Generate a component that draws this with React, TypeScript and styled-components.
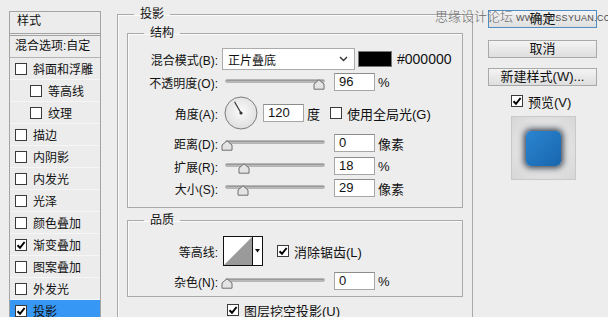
import React from 'react';
import styled, { createGlobalStyle } from 'styled-components';

const GlobalStyle = createGlobalStyle`
    html, body {
        margin: 0;
        padding: 0;
        background: #ededed;
    }
    body {
        font-family: "Liberation Sans", "Noto Sans CJK SC", sans-serif;
        font-size: 12px;
        color: #111;
    }
`

const Root = styled.div`
    position: relative;
    display: flex;
    align-items: flex-start;
    width: 608px;
    height: 317px;
    overflow: hidden;
    background: #ededed;
`

/* ---------- left style list ---------- */

const StylePanel = styled.div`
    margin: 11px 0 0 9px;
    width: 92px;
    height: 330px;
    box-sizing: border-box;
    border: 1px solid #a4a4a4;
    background: #ececec;
    flex-shrink: 0;
`

const PanelHeader = styled.div`
    height: 21px;
    line-height: 19px;
    padding-left: 7px;
    border-bottom: 3px double #a2a2a2;
`

const BlendRow = styled.div`
    height: 21px;
    line-height: 20px;
    padding-left: 5px;
    border-bottom: 1px solid #b4b4b4;
    white-space: nowrap;
`

const StyleItem = styled.div<{ $nested?: boolean; $active?: boolean }>`
    height: 22px;
    box-sizing: border-box;
    display: flex;
    align-items: center;
    gap: 6px;
    padding-left: ${p => (p.$nested ? 20 : 5)}px;
    border-bottom: 1px solid #f6f6f6;
    background: ${p => (p.$active ? '#3797f5' : 'transparent')};
    white-space: nowrap;
`

/* ---------- checkbox ---------- */

const Box = styled.span`
    width: 12px;
    height: 12px;
    box-sizing: border-box;
    border: 1px solid #3a3a3a;
    background: #fff;
    display: inline-flex;
    align-items: center;
    justify-content: center;
    flex-shrink: 0;
`

const Check: React.FC<{ on?: boolean }> = ({ on }) => (
    <Box>
        {on && (
            <svg width="10" height="10" viewBox="0 0 10 10">
                <path d="M1.5 5.2 L4 7.8 L8.6 2" fill="none" stroke="#000" strokeWidth="2" />
            </svg>
        )}
    </Box>
)

/* ---------- middle settings ---------- */

const Middle = styled.div`
    margin-left: 16px;
    padding-top: 6px;
    width: 356px;
    flex-shrink: 0;
`

const Group = styled.fieldset`
    margin: 0;
    padding: 0;
    min-width: 0;
    border: 1px solid #a9a9a9;
    box-shadow: inset 1px 1px 0 #fafafa;
`

const Legend = styled.legend`
    margin-left: 16px;
    padding: 0 6px;
    font-size: 12px;
    line-height: 16px;
`

const OuterBody = styled.div`
    padding: 3px 9px 0 9px;
    height: 300px;
`

const GroupBody = styled.div<{ $top: number; $bottom: number }>`
    padding: ${p => p.$top}px 0 ${p => p.$bottom}px 0;
    display: flex;
    flex-direction: column;
`

const Row = styled.div<{ $h: number; $mt?: number }>`
    display: flex;
    align-items: center;
    height: ${p => p.$h}px;
    margin-top: ${p => p.$mt ?? 0}px;
`

const Label = styled.div`
    width: 90px;
    text-align: right;
    white-space: nowrap;
    flex-shrink: 0;
`

const Select = styled.div`
    margin-left: 4px;
    width: 133px;
    height: 22px;
    box-sizing: border-box;
    border: 1px solid #ababab;
    background: #fff;
    display: flex;
    align-items: center;
    justify-content: space-between;
    padding: 0 6px 0 5px;
`

const Swatch = styled.div`
    margin-left: 3px;
    width: 34px;
    height: 16px;
    background: #000;
    border: 1px solid #777;
    box-sizing: border-box;
`

const HexText = styled.span`
    margin-left: 5px;
    font-size: 14px;
`

const Track = styled.div<{ $ml: number }>`
    position: relative;
    margin-left: ${p => p.$ml}px;
    width: 100px;
    height: 18px;
    flex-shrink: 0;
    &::before {
        content: '';
        position: absolute;
        left: 0;
        right: 0;
        top: 6px;
        height: 4px;
        border-radius: 2px;
        background: linear-gradient(#8a8a8a, #c9c9c9);
        border: 1px solid #b5b5b5;
        box-sizing: border-box;
    }
`

const Thumb = styled.svg<{ $pos: number }>`
    position: absolute;
    top: 6px;
    left: ${p => p.$pos - 6}px;
`

const Slider: React.FC<{ pos: number; ml?: number }> = ({ pos, ml = 7 }) => (
    <Track $ml={ml}>
        <Thumb $pos={pos} width="12" height="11" viewBox="0 0 12 11">
            <path d="M6 0.8 L11 5 L11 10.2 L1 10.2 L1 5 Z" fill="#e4e4e4" stroke="#6e6e6e" strokeWidth="1" />
        </Thumb>
    </Track>
)

const NumBox = styled.div<{ $ml: number }>`
    margin-left: ${p => p.$ml}px;
    width: 41px;
    height: 18px;
    box-sizing: border-box;
    border: 1px solid #a6a6a6;
    border-top-color: #8c8c8c;
    background: #fff;
    padding-left: 4px;
    font-size: 13px;
    line-height: 16px;
    flex-shrink: 0;
`

const Unit = styled.span<{ $ml?: number }>`
    margin-left: ${p => p.$ml ?? 3}px;
    white-space: nowrap;
    font-size: 13px;
`

const Dial = styled.svg`
    margin-left: 6px;
    flex-shrink: 0;
`

const CheckLabel = styled.label<{ $ml: number }>`
    margin-left: ${p => p.$ml}px;
    display: flex;
    align-items: center;
    gap: 5px;
    white-space: nowrap;
    font-size: 13px;
`

const ContourBox = styled.div`
    margin-left: 5px;
    width: 40px;
    height: 30px;
    box-sizing: border-box;
    border: 1px solid #111;
    background: #fff;
    display: flex;
    flex-shrink: 0;
`

const ContourArrow = styled.div`
    flex: 1;
    border-left: 1px solid #111;
    display: flex;
    align-items: center;
    justify-content: center;
`

const Gap = styled.div<{ $h: number }>`
    height: ${p => p.$h}px;
`

/* ---------- right column ---------- */

const Right = styled.div`
    margin-left: 15px;
    padding-top: 10px;
    width: 109px;
    display: flex;
    flex-direction: column;
    flex-shrink: 0;
`

const Button = styled.div<{ $primary?: boolean; $mt: number }>`
    margin-top: ${p => p.$mt}px;
    height: 18px;
    box-sizing: border-box;
    border: 1px solid ${p => (p.$primary ? '#4f8fc6' : '#a9a9a9')};
    background: linear-gradient(#f4f4f4, #dedede);
    text-align: center;
    font-size: 13px;
    line-height: 16px;
    white-space: nowrap;
`

const PreviewRow = styled.label`
    margin: 9px 0 0 23px;
    display: flex;
    align-items: center;
    gap: 5px;
    height: 12px;
    font-size: 13px;
`

const PreviewBox = styled.div`
    margin: 9px 0 0 23px;
    width: 65px;
    height: 64px;
    box-sizing: border-box;
    border: 1px solid #c9c9c9;
    background: radial-gradient(circle, #e9e9e9 30%, #d6d6d6 100%);
    display: flex;
    align-items: center;
    justify-content: center;
`

const PreviewSwatch = styled.div`
    width: 35px;
    height: 35px;
    border-radius: 5px;
    background: linear-gradient(135deg, #2b85d0, #1766ad);
    box-shadow: 0 0 6px 2px rgba(10, 20, 40, 0.8);
`

const Watermark = styled.div`
    position: absolute;
    left: 435px;
    top: 6px;
    display: flex;
    align-items: baseline;
    gap: 3px;
    white-space: nowrap;
    color: #6a6a6a;
    pointer-events: none;
`

const WmCn = styled.span`
    font-size: 13px;
    font-family: "Noto Sans CJK SC", sans-serif;
    font-weight: 300;
`

const WmEn = styled.span`
    font-size: 9px;
    letter-spacing: 0.3px;
    color: #4c4c4c;
`

const styleItems: { name: string; on?: boolean; nested?: boolean; active?: boolean }[] = [
    { name: '斜面和浮雕' },
    { name: '等高线', nested: true },
    { name: '纹理', nested: true },
    { name: '描边' },
    { name: '内阴影' },
    { name: '内发光' },
    { name: '光泽' },
    { name: '颜色叠加' },
    { name: '渐变叠加', on: true },
    { name: '图案叠加' },
    { name: '外发光' },
    { name: '投影', on: true, active: true },
];

const App: React.FC = () => {
    // angle dial needle, 120 degrees
    const a = (120 * Math.PI) / 180;
    const nx = 17 + Math.cos(a) * 13;
    const ny = 17 - Math.sin(a) * 13;

    return <Root>
        <GlobalStyle />
        <StylePanel>
            <PanelHeader>样式</PanelHeader>
            <BlendRow>混合选项:自定</BlendRow>
            {styleItems.map((s, i) => (
                <StyleItem key={i} $nested={s.nested} $active={s.active}>
                    <Check on={s.on} />
                    <span>{s.name}</span>
                </StyleItem>
            ))}
        </StylePanel>

        <Middle>
            <Group>
                <Legend>投影</Legend>
                <OuterBody>
                    <Group>
                        <Legend>结构</Legend>
                        <GroupBody $top={7} $bottom={10}>
                            <Row $h={22}>
                                <Label>混合模式(B):</Label>
                                <Select>
                                    <span>正片叠底</span>
                                    <svg width="9" height="6" viewBox="0 0 9 6">
                                        <path d="M1 1 L4.5 4.5 L8 1" fill="none" stroke="#333" strokeWidth="1.4" />
                                    </svg>
                                </Select>
                                <Swatch />
                                <HexText>#000000</HexText>
                            </Row>
                            <Row $h={18} $mt={3}>
                                <Label>不透明度(O):</Label>
                                <Slider pos={94} />
                                <NumBox $ml={9}>96</NumBox>
                                <Unit>%</Unit>
                            </Row>
                            <Row $h={34} $mt={5}>
                                <Label>角度(A):</Label>
                                <Dial width="34" height="34" viewBox="0 0 34 34">
                                    <defs>
                                        <radialGradient id="dialFill" cx="50%" cy="45%" r="60%">
                                            <stop offset="0%" stopColor="#fbfbfb" />
                                            <stop offset="100%" stopColor="#dcdcdc" />
                                        </radialGradient>
                                    </defs>
                                    <circle cx="17" cy="17" r="16" fill="url(#dialFill)" stroke="#7d7d7d" strokeWidth="1" />
                                    <line x1="17" y1="17" x2={nx} y2={ny} stroke="#333" strokeWidth="1.2" />
                                    <circle cx="17" cy="17" r="1.6" fill="#333" />
                                </Dial>
                                <NumBox $ml={5}>120</NumBox>
                                <Unit>度</Unit>
                                <CheckLabel $ml={10}>
                                    <Check />
                                    使用全局光(G)
                                </CheckLabel>
                            </Row>
                            <Row $h={18} $mt={4}>
                                <Label>距离(D):</Label>
                                <Slider pos={2} />
                                <NumBox $ml={9}>0</NumBox>
                                <Unit>像素</Unit>
                            </Row>
                            <Row $h={18} $mt={5}>
                                <Label>扩展(R):</Label>
                                <Slider pos={19} />
                                <NumBox $ml={9}>18</NumBox>
                                <Unit>%</Unit>
                            </Row>
                            <Row $h={18} $mt={4}>
                                <Label>大小(S):</Label>
                                <Slider pos={18} />
                                <NumBox $ml={9}>29</NumBox>
                                <Unit>像素</Unit>
                            </Row>
                        </GroupBody>
                    </Group>
                    <Gap $h={4} />
                    <Group>
                        <Legend>品质</Legend>
                        <GroupBody $top={8} $bottom={6}>
                            <Row $h={30}>
                                <Label>等高线:</Label>
                                <ContourBox>
                                    <svg width="28" height="28" viewBox="0 0 28 28">
                                        <path d="M0 28 L28 0 L28 28 Z" fill="#9a9a9a" />
                                    </svg>
                                    <ContourArrow>
                                        <svg width="5" height="4" viewBox="0 0 5 4">
                                            <path d="M0 0 L5 0 L2.5 3.5 Z" fill="#111" />
                                        </svg>
                                    </ContourArrow>
                                </ContourBox>
                                <CheckLabel $ml={14}>
                                    <Check on />
                                    消除锯齿(L)
                                </CheckLabel>
                            </Row>
                            <Row $h={18} $mt={6}>
                                <Label>杂色(N):</Label>
                                <Slider pos={2} />
                                <NumBox $ml={9}>0</NumBox>
                                <Unit>%</Unit>
                            </Row>
                        </GroupBody>
                    </Group>
                    <Row $h={16} $mt={5}>
                        <CheckLabel $ml={100}>
                            <Check on />
                            图层挖空投影(U)
                        </CheckLabel>
                    </Row>
                </OuterBody>
            </Group>
        </Middle>

        <Right>
            <Button $primary $mt={0}>确定</Button>
            <Button $mt={12}>取消</Button>
            <Button $mt={10}>新建样式(W)...</Button>
            <PreviewRow>
                <Check on />
                预览(V)
            </PreviewRow>
            <PreviewBox>
                <PreviewSwatch />
            </PreviewBox>
        </Right>

        <Watermark>
            <WmCn>思缘设计论坛</WmCn>
            <WmEn>WWW.MISSYUAN.COM</WmEn>
        </Watermark>
    </Root>
}

export default App;
